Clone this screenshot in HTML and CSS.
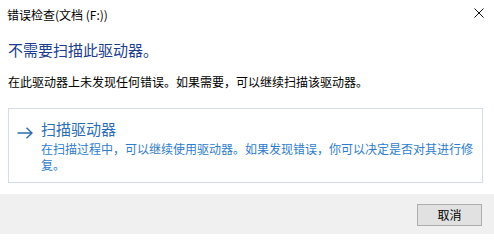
FILE: index.html
```html
<!DOCTYPE html>
<html lang="zh-CN">
<head>
<meta charset="utf-8">
<link rel="stylesheet" href="styles.css">
</head>
<body>
<div class="window">
  <div class="titlebar">
    <span class="title">错误检查(文档 (F:))</span>
    <svg class="close" width="10" height="10" viewBox="0 0 10 10"><path d="M0.5 0.5 L9.5 9.5 M9.5 0.5 L0.5 9.5" stroke="#111" stroke-width="1" fill="none"/></svg>
  </div>
  <div class="content">
    <div class="heading">不需要扫描此驱动器。</div>
    <div class="message">在此驱动器上未发现任何错误。如果需要，可以继续扫描该驱动器。</div>
    <div class="card">
      <svg class="arrow" width="16" height="12" viewBox="0 0 16 12"><path d="M0.5 6 H15 M9.5 0.8 L15 6 L9.5 11.2" stroke="#2b6db5" stroke-width="1.4" fill="none"/></svg>
      <div class="card-text">
        <div class="card-title">扫描驱动器</div>
        <div class="card-desc">在扫描过程中，可以继续使用驱动器。如果发现错误，你可以决定是否对其进行修复。</div>
      </div>
    </div>
  </div>
  <div class="footer">
    <button class="btn">取消</button>
  </div>
</div>
</body>
</html>
```
FILE: styles.css
```css
html, body {
  margin: 0;
  padding: 0;
  background: #ffffff;
}
body {
  font-family: "Noto Sans CJK SC", "Noto Sans", sans-serif;
  font-size: 12px;
  color: #000;
}
.window {
  width: 494px;
  height: 234px;
  display: flex;
  flex-direction: column;
}
.titlebar {
  height: 30px;
  display: flex;
  align-items: center;
  justify-content: space-between;
  padding: 0 10px 0 7px;
}
.title {
  font-size: 12px;
  line-height: 16px;
  color: #000;
}
.close {
  display: block;
  margin-top: -4px;
}
.content {
  flex: 1;
  padding: 0 11px 0 8px;
}
.heading {
  margin-top: 10px;
  font-size: 15px;
  line-height: 20px;
  color: #1c3d8f;
}
.message {
  margin-top: 14px;
  font-size: 12px;
  line-height: 16px;
  color: #000;
}
.card {
  margin-top: 18px;
  border: 1px solid #d3dde8;
  height: 73px;
  box-sizing: content-box;
  display: flex;
  align-items: flex-start;
  padding: 0 0 0 8px;
}
.arrow {
  display: block;
  margin-top: 18px;
  margin-right: 8px;
  flex: none;
}
.card-text {
  padding-top: 10px;
  width: 438px;
}
.card-title {
  font-size: 15px;
  line-height: 20px;
  color: #2b6db5;
}
.card-desc {
  margin-top: 2px;
  font-size: 12px;
  line-height: 16px;
  color: #2e7dcc;
}
.footer {
  height: 40px;
  background: #f0f0f0;
  display: flex;
  justify-content: flex-end;
  align-items: flex-start;
  padding: 10px 12px 0 0;
  box-sizing: border-box;
}
.btn {
  width: 65px;
  height: 22px;
  border: 1px solid #adadad;
  background: #e1e1e1;
  font-family: "Noto Sans CJK SC", "Noto Sans", sans-serif;
  font-size: 12px;
  line-height: 16px;
  color: #000;
  padding: 0;
  margin: 0;
}
```
